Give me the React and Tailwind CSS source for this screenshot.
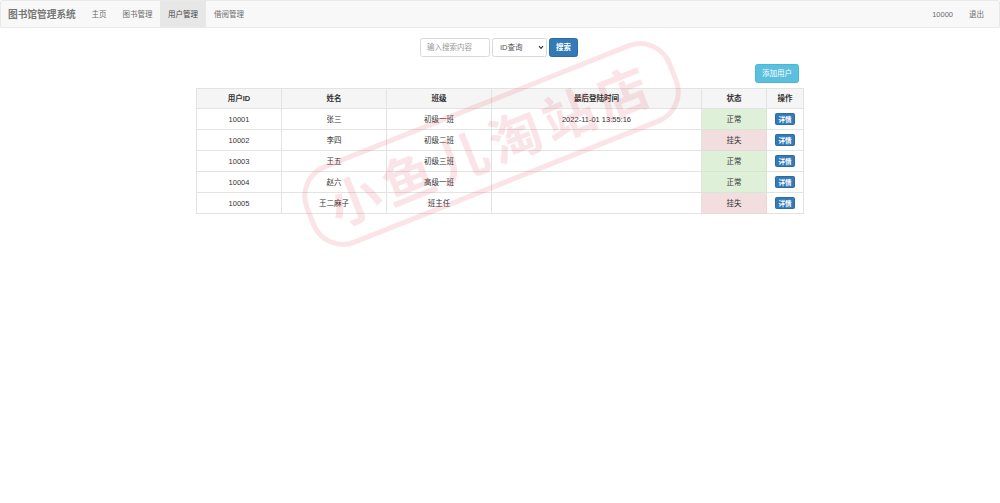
import React from "react";

const users = [
  ["10001", "张三", "初级一班", "2022-11-01 13:55:16", true],
  ["10002", "李四", "初级二班", "", false],
  ["10003", "王五", "初级三班", "", true],
  ["10004", "赵六", "高级一班", "", true],
  ["10005", "王二麻子", "班主任", "", false],
];

const headers = ["用户ID", "姓名", "班级", "最后登陆时间", "状态", "操作"];

function NavBar() {
  return (
    <nav className="flex h-7 items-stretch rounded-[2px] border border-[#e9e9e9] bg-[#f8f8f8] text-[#6c6c6c]">
      <a className="flex w-[82px] items-center pl-[7px] text-[9.7px] font-bold whitespace-nowrap text-[#777]">图书馆管理系统</a>
      <a className="flex w-[32px] items-center justify-center">主页</a>
      <a className="flex w-[45px] items-center justify-center">图书管理</a>
      <a className="flex w-[46px] items-center justify-center bg-[#e7e7e7] text-[#444]">用户管理</a>
      <a className="flex w-[46px] items-center justify-center">借阅管理</a>
      <a className="ml-auto flex items-center pr-4">10000</a>
      <a className="flex items-center pr-[15px]">退出</a>
    </nav>
  );
}

function Watermark() {
  return (
    <div className="pointer-events-none absolute top-[101px] left-[294px] flex h-[86px] w-[395px] rotate-[-21.7deg] items-center justify-center rounded-[34px] border-[5px] border-[#e6394b] pr-[2px] pb-[3px] font-['Noto_Sans_CJK_SC',sans-serif] text-[52px] leading-none font-bold tracking-[5.5px] whitespace-nowrap text-[#e6394b] opacity-[0.13]">
      小鱼儿淘站店
    </div>
  );
}

export default function App() {
  return (
    <div className="relative h-[503px] overflow-hidden bg-white font-['Liberation_Sans','Noto_Sans_CJK_SC',sans-serif] text-[7.5px] leading-[11px] text-[#333]">
      <NavBar />
      <form className="mt-[10px] ml-[420px] flex h-[19px] gap-[2px]">
        <input
          className="w-[70px] rounded-[2.5px] border border-[#d8d8d8] bg-white px-[6px] placeholder:text-[#999]"
          placeholder="输入搜索内容"
        />
        <div className="flex w-[55px] items-center justify-between rounded-[2.5px] border border-[#d8d8d8] bg-white pr-[2px] pl-[7px] text-[#555]">
          <span>ID查询</span>
          <svg className="h-[5px] w-[6px]" viewBox="0 0 6 5" fill="none" stroke="#333" strokeWidth="1.2">
            <path d="M1 1.2 3 3.3 5 1.2" />
          </svg>
        </div>
        <button type="button" className="w-[29px] rounded-[2.5px] border border-[#2e6da4] bg-[#337ab7] font-bold text-white">搜索</button>
      </form>
      <div className="mt-[7px] flex w-[799px] justify-end">
        <button type="button" className="h-[19px] w-[44px] rounded-[2.5px] border border-[#46b8da] bg-[#5bc0de] text-white">添加用户</button>
      </div>
      <table className="mt-[5px] ml-[196px] w-[608px] table-fixed border-collapse text-center">
        <colgroup>
          <col className="w-[85px]" />
          <col className="w-[105px]" />
          <col className="w-[105px]" />
          <col className="w-[210px]" />
          <col className="w-[65px]" />
          <col className="w-[37px]" />
        </colgroup>
        <thead>
          <tr className="h-[20px] bg-[#f5f5f5]">
            {headers.map((h) => (
              <th key={h} className="border border-[#e3e3e3] p-0 font-bold">{h}</th>
            ))}
          </tr>
        </thead>
        <tbody>
          {users.map(([id, name, grade, time, active]) => (
            <tr key={id} className="h-[21px]">
              <td className="border border-[#e3e3e3] p-0">{id}</td>
              <td className="border border-[#e3e3e3] p-0">{name}</td>
              <td className="border border-[#e3e3e3] p-0">{grade}</td>
              <td className="border border-[#e3e3e3] p-0">{time}</td>
              <td className={active ? "border border-[#d9e5d4] bg-[#dff0d8] p-0" : "border border-[#e8d9d9] bg-[#f2dede] p-0"}>
                {active ? "正常" : "挂失"}
              </td>
              <td className="border border-[#e3e3e3] p-0">
                <button type="button" className="mx-auto flex h-[12px] w-[20px] items-center justify-center rounded-[1.5px] border border-[#2e6da4] bg-[#337ab7] text-[6.5px] font-bold text-white">
                  详情
                </button>
              </td>
            </tr>
          ))}
        </tbody>
      </table>
      <Watermark />
    </div>
  );
}
